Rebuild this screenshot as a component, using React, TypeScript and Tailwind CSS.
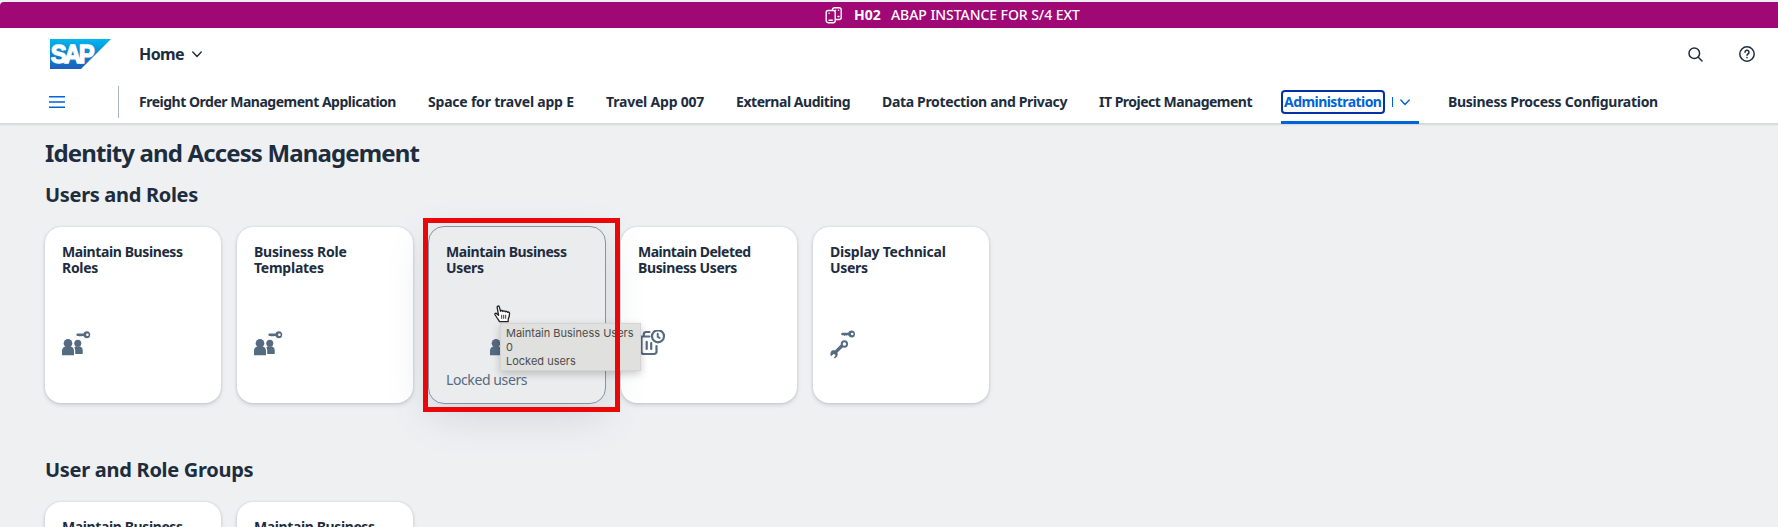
import type { ReactNode } from "react";

function KeyGlyph({ x, y }: { x: number; y: number }) {
  return (
    <g transform={`translate(${x} ${y})`}>
      <path
        fillRule="evenodd"
        d="M10.500 0a3.500 3.500 0 0 1 0 7c-1.500 0-2.700-.9-3.200-2.200H5.900l-.7.500-.8-.5-.9.600-.9-.6H.8L0 3.600l1-1.400h6.300C7.800.9 9 0 10.500 0Zm.7 2.200a1.300 1.300 0 1 0 0 2.600 1.300 1.300 0 0 0 0-2.600Z"
      />
    </g>
  );
}

function People() {
  return (
    <g>
      <circle cx="6" cy="12.200" r="4.300" />
      <path d="M0 24.200v-4.600c0-2 1.300-3.700 3.300-4.200h5.400c2 .5 3.300 2.200 3.300 4.200v4.600Z" />
      <circle cx="15.800" cy="12.300" r="3.500" />
      <path d="M13.200 23v-3.500c0-1.200-.3-2.200-.9-3 .5-.6 1.200-1 2-1.200h2.900c2.100.4 3.500 1.700 3.500 3.700v4Z" />
    </g>
  );
}

function UsersKeyIcon() {
  return (
    <svg width="30" height="26" viewBox="0 0 30 26" fill="#556b82">
      <People />
      <KeyGlyph x={14.2} y={0.2} />
    </svg>
  );
}

function WrenchKeyIcon() {
  return (
    <svg width="28" height="29" viewBox="0 0 28 29" fill="#556b82">
      <KeyGlyph x={11} y={0.5} />
      <circle cx="14.400" cy="14" r="2.700" fill="none" stroke="#556b82" strokeWidth="1.900" />
      <path d="m12.300 15.500-6.500 6.400" stroke="#556b82" strokeWidth="3.300" />
      <path d="M1.700 20.800c1.700-.9 4-.5 5.200 1 1.200 1.600 1.100 3.800-.2 5.200-.8.9-2 1.300-3.200 1.200l1.900-2.400-.3-1.300-1.500-.4L1 26.300c-1-1.700-.8-4 .7-5.500Z" />
    </svg>
  );
}

function TrashClockIcon() {
  return (
    <svg width="28" height="28" viewBox="0 0 28 28" fill="none" stroke="#556b82" strokeWidth="2.200" strokeLinecap="round">
      <path d="M1 6.500h10.500M5.800 6V4.200A2.200 2.200 0 0 1 8 2h3.500M3.500 7.500v14.200A2.300 2.300 0 0 0 5.800 24h10.400a2.300 2.300 0 0 0 2.300-2.300V16M8.700 11.800v7.200M13.200 13v6" />
      <circle cx="20" cy="6.300" r="6" />
      <path d="M19.700 3.800v2.900l1.800 1.200" strokeWidth="1.900" />
    </svg>
  );
}

type Line = { text: string; spacing: string };

const maintainBusiness: Line = { text: "Maintain Business", spacing: "tracking-[-0.4px]" };

function Tile({ title, icon, footer, active }: { title: Line[]; icon?: ReactNode; footer?: string; active?: boolean }) {
  return (
    <div
      className={
        active
          ? "relative -m-px flex h-[178px] w-[178px] shrink-0 flex-col rounded-2xl border border-[#8793a3] bg-[#ebecee] px-[17px] pt-[17px] shadow-[0_12px_40px_0_rgba(85,107,130,0.2)]"
          : "flex h-[176px] w-[176px] shrink-0 flex-col rounded-2xl bg-white px-[17px] pt-[17px] shadow-[0_0_2px_0_rgba(85,107,130,0.24),0_2px_4px_0_rgba(85,107,130,0.24)]"
      }
    >
      <h3 className="h-[68px] text-[14px] leading-4 font-bold whitespace-nowrap">
        {title.map((l) => (
          <span key={l.text} className={`block ${l.spacing}`}>
            {l.text}
          </span>
        ))}
      </h3>
      <div className={active ? "flex h-[60px] items-center pt-[4px] pl-[44px]" : "flex h-[64px] items-center"}>{icon}</div>
      {footer && <p className="text-[14px] leading-4 tracking-[-0.4px] whitespace-nowrap text-[#556b82]">{footer}</p>}
    </div>
  );
}

const navItems = [
  { label: "Freight Order Management Application", box: "w-[257px] tracking-[-0.49px]" },
  { label: "Space for travel app E", box: "w-[146px] tracking-[-0.21px]" },
  { label: "Travel App 007", box: "w-[98px] tracking-[-0.2px]" },
  { label: "External Auditing", box: "w-[114px] tracking-[-0.46px]" },
  { label: "Data Protection and Privacy", box: "w-[185px] tracking-[-0.34px]" },
  { label: "IT Project Management", box: "w-[153px] tracking-[-0.5px]" },
];

function Banner() {
  return (
    <div className="flex h-[26px] shrink-0 items-center rounded-tl-[4px] bg-[#a00875] pl-[825px] text-[14px] leading-4 text-white">
      <svg width="18" height="17" viewBox="0 0 18 17" fill="none" stroke="white" strokeWidth="1.400" strokeLinecap="round">
        <path d="M7.500 3.300V2.700a2 2 0 0 1 2-2h4.700a2 2 0 0 1 2 2v7.800a2 2 0 0 1-2 2h-3" />
        <rect x="1.200" y="3.500" width="9" height="12.200" rx="2" />
        <path d="M4 13.200h3.300M13 9.500h1M10.500 3.300h.1M13.500 3.300h.1M4 6.300h.1" />
      </svg>
      <span className="ml-[11px] w-[37px] font-bold">H02</span>
      <span className="font-medium tracking-[-0.06px] whitespace-nowrap">ABAP INSTANCE FOR S/4 EXT</span>
    </div>
  );
}

function Header() {
  return (
    <header className="relative flex h-[95px] shrink-0 flex-col bg-white shadow-[0_1px_0_1px_#d9dcdf,0_3px_2px_0_#e6e9eb]">
      <div className="flex h-[52px] items-center pl-[50px]">
        <svg width="61" height="30" viewBox="0 0 61 30" className="shrink-0">
          <defs>
            <linearGradient id="logo" x1="0" y1="0" x2="0" y2="1">
              <stop offset="0" stopColor="#00b8f1" />
              <stop offset="0.500" stopColor="#0d83cf" />
              <stop offset="1" stopColor="#1e5fbb" />
            </linearGradient>
          </defs>
          <path d="M0 0h61L31 30H0Z" fill="url(#logo)" />
          <text x="0.800" y="24.200" transform="scale(0.920 1)" fontFamily="Liberation Sans" fontWeight="700" fontSize="26" letterSpacing="-2.800" fill="white" stroke="white" strokeWidth="1.300">
            SAP
          </text>
        </svg>
        <span className="ml-[28px] w-[53px] text-[16px] leading-5 font-bold tracking-[-0.6px]">Home</span>
        <svg width="10" height="7" viewBox="0 0 10 7" fill="none" stroke="#1d2d3e" strokeWidth="1.400" strokeLinecap="round" strokeLinejoin="round">
          <path d="m.8 1 4.200 4.500L9.200 1" />
        </svg>
        <svg width="15" height="15" viewBox="0 0 15 15" fill="none" stroke="#1d2d3e" strokeWidth="1.500" strokeLinecap="round" className="ml-auto">
          <circle cx="6.300" cy="6.300" r="5.300" />
          <path d="m10.300 10.300 3.700 3.700" />
        </svg>
        <svg width="16" height="16" viewBox="0 0 16 16" fill="none" stroke="#1d2d3e" strokeWidth="1.500" strokeLinecap="round" className="mr-[23px] ml-[36px]">
          <circle cx="8" cy="8" r="7.200" />
          <path d="M6 6.300a2 2 0 1 1 3 1.700c-.7.4-1 .7-1 1.300M8 11.500v.2" />
        </svg>
      </div>
      <nav className="flex h-[43px] items-start pl-[49px] text-[14px] leading-5 font-bold whitespace-nowrap">
        <svg width="16" height="12" viewBox="0 0 16 12" fill="#0064d9" className="mt-[16px] shrink-0">
          <path d="M0 0h16v1.500H0ZM0 5.250h16v1.500H0ZM0 10.500h16v1.500H0Z" />
        </svg>
        <div className="mt-[6px] mr-[20px] ml-[53px] h-8 w-px shrink-0 bg-[#a9b4be]" />
        <div className="flex gap-8 pt-[12px]">
          {navItems.map((n) => (
            <span key={n.label} className={n.box}>
              {n.label}
            </span>
          ))}
        </div>
        <div className="relative ml-[29px] flex h-[44px] w-[138px] shrink-0 items-start border-b-[3px] border-[#0064d9] pt-[10px] text-[#0064d9]">
          <span className="h-6 w-[104px] rounded-[4px] border-2 border-[#0032a5] pl-px leading-5 tracking-[-0.56px]">Administration</span>
          <div className="mt-[7px] ml-[7px] h-[10px] w-px bg-[#0064d9]" />
          <svg width="10" height="7" viewBox="0 0 10 7" fill="none" stroke="#0064d9" strokeWidth="1.400" strokeLinecap="round" strokeLinejoin="round" className="mt-[9px] ml-[7px]">
            <path d="m.8 1 4.200 4.500L9.200 1" />
          </svg>
        </div>
        <span className="ml-[29px] pt-[12px] tracking-[-0.28px]">Business Process Configuration</span>
      </nav>
    </header>
  );
}

export default function App() {
  return (
    <div className="relative flex h-[527px] w-[1778px] flex-col overflow-hidden bg-[#eff0f2] pt-[2px] font-['Noto_Sans',sans-serif] text-[#1d2d3e]">
      <Banner />
      <Header />
      <main className="flex flex-col pl-[45px]">
        <h1 className="mt-[14px] text-[24px] leading-8 font-bold tracking-[-0.87px]">Identity and Access Management</h1>
        <h2 className="mt-[14px] text-[20px] leading-6 font-bold tracking-[-0.32px]">Users and Roles</h2>
        <section className="mt-[20px] flex gap-4">
          <Tile title={[maintainBusiness, { text: "Roles", spacing: "tracking-[-0.3px]" }]} icon={<UsersKeyIcon />} />
          <Tile
            title={[
              { text: "Business Role", spacing: "tracking-[-0.2px]" },
              { text: "Templates", spacing: "tracking-[-0.25px]" },
            ]}
            icon={<UsersKeyIcon />}
          />
          <Tile
            active
            title={[maintainBusiness, { text: "Users", spacing: "tracking-[-0.3px]" }]}
            footer="Locked users"
            icon={
              <svg width="30" height="26" viewBox="0 0 30 26" fill="#556b82">
                <People />
              </svg>
            }
          />
          <Tile
            title={[
              { text: "Maintain Deleted", spacing: "tracking-[-0.5px]" },
              { text: "Business Users", spacing: "tracking-[-0.36px]" },
            ]}
            icon={<TrashClockIcon />}
          />
          <Tile
            title={[
              { text: "Display Technical", spacing: "tracking-[-0.22px]" },
              { text: "Users", spacing: "tracking-[-0.3px]" },
            ]}
            icon={<WrenchKeyIcon />}
          />
        </section>
        <h2 className="mt-[55px] text-[20px] leading-6 font-bold tracking-[-0.28px]">User and Role Groups</h2>
        <section className="mt-[20px] flex gap-4">
          <Tile title={[maintainBusiness]} />
          <Tile title={[maintainBusiness]} />
        </section>
      </main>

      <div className="absolute top-[323px] left-[500px] h-[48px] w-[141px] border border-[#d4d4d2] bg-[#e0e0de] py-[2px] pl-[5px] font-[Inter,sans-serif] text-[11px] leading-[14px] whitespace-nowrap text-[#4c4c4c] shadow-[0_3px_8px_rgba(0,0,0,0.2)]">
        Maintain Business Users
        <br />0<br />
        Locked users
      </div>
      <div className="absolute top-[218px] left-[423px] h-[194px] w-[197px] border-[5px] border-[#eb0707]" />
      <svg width="17" height="18" viewBox="0 0 17 18" className="absolute top-[305px] left-[494px]" fill="white" stroke="#222" strokeWidth="1.300" strokeLinejoin="round">
        <path d="M5.500 16.700c-.5-1.400-1.600-2.500-2.700-4.200L.9 9.500c-.4-.9.700-1.600 1.500-1.100l2.200 1.900L3.200 2.600c-.3-1.700 1.600-2.200 2.100-.7l1.300 4.400c.1-1 1.900-1.200 2.300.2.300-1 2-1 2.400.3.600-.9 1.900-.7 2.200.5.700-.6 1.900-.1 2 .8.100 2-.3 4-1.200 5.700l-.2 2.900Z" />
        <path d="M7.700 9.800v4M9.700 9.800v4M11.700 9.800v4" strokeWidth=".9" />
      </svg>
    </div>
  );
}
